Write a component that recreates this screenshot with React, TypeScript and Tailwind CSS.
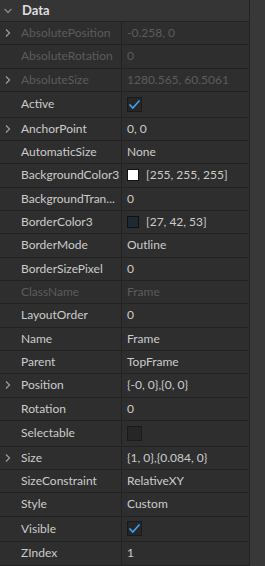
import { ReactNode } from 'react';

type Row = {
  label: string;
  value?: string;
  expand?: boolean;
  disabled?: boolean;
  kind?: 'check' | 'uncheck' | 'color';
  swatch?: string;
};

const rows: Row[] = [
  { label: 'AbsolutePosition', value: '-0.258, 0', expand: true, disabled: true },
  { label: 'AbsoluteRotation', value: '0', disabled: true },
  { label: 'AbsoluteSize', value: '1280.565, 60.5061', expand: true, disabled: true },
  { label: 'Active', kind: 'check' },
  { label: 'AnchorPoint', value: '0, 0', expand: true },
  { label: 'AutomaticSize', value: 'None' },
  { label: 'BackgroundColor3', value: '[255, 255, 255]', kind: 'color', swatch: 'bg-white' },
  { label: 'BackgroundTran...', value: '0' },
  { label: 'BorderColor3', value: '[27, 42, 53]', kind: 'color', swatch: 'bg-[#1b2a35]' },
  { label: 'BorderMode', value: 'Outline' },
  { label: 'BorderSizePixel', value: '0' },
  { label: 'ClassName', value: 'Frame', disabled: true },
  { label: 'LayoutOrder', value: '0' },
  { label: 'Name', value: 'Frame' },
  { label: 'Parent', value: 'TopFrame' },
  { label: 'Position', value: '{-0, 0},{0, 0}', expand: true },
  { label: 'Rotation', value: '0' },
  { label: 'Selectable', kind: 'uncheck' },
  { label: 'Size', value: '{1, 0},{0.084, 0}', expand: true },
  { label: 'SizeConstraint', value: 'RelativeXY' },
  { label: 'Style', value: 'Custom' },
  { label: 'Visible', kind: 'check' },
  { label: 'ZIndex', value: '1' },
];

function ChevronRight() {
  return (
    <svg width="8" height="10" viewBox="0 0 8 10" className="shrink-0">
      <path d="M2 1.5 L5.5 5 L2 8.5" fill="none" stroke="#9a9a9a" strokeWidth="1.3" />
    </svg>
  );
}

function ChevronDown() {
  return (
    <svg width="10" height="8" viewBox="0 0 10 8">
      <path d="M1.5 2 L5 5.5 L8.5 2" fill="none" stroke="#8a8a8a" strokeWidth="1.3" />
    </svg>
  );
}

function Checkbox({ checked }: { checked: boolean }) {
  return (
    <div className="w-[15px] h-[15px] bg-[#262626] border border-[#1a1a1a] flex items-center justify-center">
      {checked && (
        <svg width="13" height="11" viewBox="0 0 13 11">
          <path d="M1.5 5.5 L4.8 9 L11.5 1.5" fill="none" stroke="#3aa3f2" strokeWidth="1.6" />
        </svg>
      )}
    </div>
  );
}

function Value({ row }: { row: Row }): ReactNode {
  if (row.kind === 'check') return <Checkbox checked />;
  if (row.kind === 'uncheck') return <Checkbox checked={false} />;
  if (row.kind === 'color')
    return (
      <div className="flex items-center gap-[7px]">
        <div className={`w-[12px] h-[12px] border border-[#111] ${row.swatch}`} />
        <span>{row.value}</span>
      </div>
    );
  return <span>{row.value}</span>;
}

export default function App() {
  return (
    <div
      className="w-[265px] h-[566px] bg-[#2e2e2e] flex overflow-hidden text-[12px] text-[#cccccc]"
      style={{ fontFamily: 'Lato, "Noto Sans", sans-serif' }}
    >
      <div className="w-[250px] flex flex-col border-r border-[#222]">
        <div className="h-[22px] shrink-0 bg-[#353535] border-b border-[#222] flex items-center pl-[3px] gap-[9px]">
          <ChevronDown />
          <span className="font-bold text-[#dedede] text-[13px]">Data</span>
        </div>
        {rows.map((row) => (
          <div
            key={row.label}
            className={`${row.kind === 'check' || row.kind === 'uncheck' ? 'h-[25.7px]' : 'h-[23.33px]'} shrink-0 flex border-b border-[#222]`}
          >
            <div className="w-[122px] shrink-0 flex items-center border-r border-[#222] pl-[4px] overflow-hidden">
              <div className="w-[17px] shrink-0 flex items-center">{row.expand && <ChevronRight />}</div>
              <span className={`whitespace-nowrap ${row.disabled ? 'text-[#5c5c5c]' : 'text-[#cccccc]'}`}>{row.label}</span>
            </div>
            <div className={`flex-1 flex items-center pl-[5px] whitespace-nowrap ${row.disabled ? 'text-[#5c5c5c]' : 'text-[#cccccc]'}`}>
              <Value row={row} />
            </div>
          </div>
        ))}
      </div>
      <div className="flex-1 bg-[#383838]" />
    </div>
  );
}
